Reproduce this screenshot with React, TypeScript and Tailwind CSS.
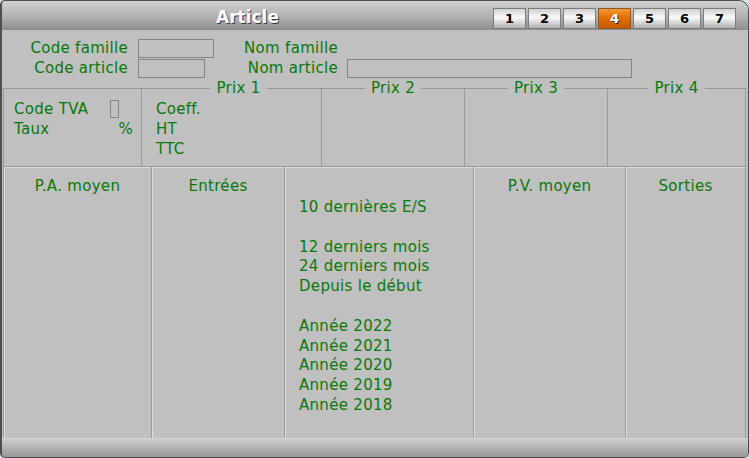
const TABS = ["1", "2", "3", "4", "5", "6", "7"];

const HISTORY = [
  "10 dernières E/S",
  "",
  "12 derniers mois",
  "24 derniers mois",
  "Depuis le début",
  "",
  "Année 2022",
  "Année 2021",
  "Année 2020",
  "Année 2019",
  "Année 2018",
];

function Tab({ label, active }: { label: string; active?: boolean }) {
  return (
    <button
      type="button"
      className={
        active
          ? "h-[21px] w-[33px] border border-[#8a5a20] bg-[linear-gradient(to_bottom,#f49a38,#e46f00_45%,#c85a00)] text-[13px] font-bold leading-[19px] text-white [text-shadow:1px_1px_0_#3a3a3a]"
          : "h-[21px] w-[33px] border border-[#7c7c7c] bg-[linear-gradient(to_bottom,#d0d0d0,#fafafa_45%,#b0b0b0)] text-[13px] font-bold leading-[19px] text-black"
      }
    >
      {label}
    </button>
  );
}

function Input({ className }: { className: string }) {
  return <div className={"border border-[#858585] " + className} />;
}

export default function App() {
  return (
    <div className="h-[458px] w-[749px] bg-[#d7e6e4] font-['DejaVu_Sans',Verdana,sans-serif] text-[15px] tracking-[0.3px] text-[#0a780a]">
      <div className="flex h-full flex-col overflow-hidden rounded-b-[5px] rounded-tl-[5px] rounded-tr-[10px] border border-l-2 border-[#4e4e4e] bg-[#c0c0c0]">
        <header className="flex h-[29px] shrink-0 bg-[linear-gradient(to_bottom,#d0d0d0,#b4b4b4_50%,#8e8e8e)]">
          <h1 className="flex-1 pt-[5px] text-center text-[17px] leading-[22px] font-bold tracking-normal text-white [text-shadow:1px_1px_0_#3c3c3c]">
            Article
          </h1>
          <nav className="flex gap-[2px] pr-[12px] pt-[7px] tracking-normal">
            {TABS.map((t) => (
              <Tab key={t} label={t} active={t === "4"} />
            ))}
          </nav>
        </header>

        <main className="flex flex-1 flex-col pl-[1px] pr-[2px]">
          <div className="pt-[8px]">
            <div className="flex h-[20px] items-center">
              <span className="w-[125px] text-right">Code famille</span>
              <Input className="ml-[10px] h-[19px] w-[76px]" />
              <span className="w-[124px] text-right">Nom famille</span>
            </div>
            <div className="flex h-[20px] items-center">
              <span className="w-[125px] text-right">Code article</span>
              <Input className="ml-[10px] h-[19px] w-[67px]" />
              <span className="w-[133px] text-right">Nom article</span>
              <Input className="ml-[9px] h-[19px] w-[285px]" />
            </div>
          </div>

          <div className="mt-[2px] flex h-[86px] leading-[20px]">
            <fieldset className="w-[138px] border-l border-t border-[#9a9a9a] pl-[10px] pr-[8px] pt-[2px]">
              <legend className="w-0 leading-[17px]">&nbsp;</legend>
              <div className="flex items-center">
                <span className="w-[96px]">Code TVA</span>
                <Input className="h-[18px] w-[9px]" />
              </div>
              <div className="flex justify-between">
                <span>Taux</span>
                <span>%</span>
              </div>
            </fieldset>
            <fieldset className="w-[180px] border-l border-t border-[#9a9a9a] pl-[14px] pt-[2px]">
              <legend className="mx-auto px-[6px] leading-[17px]">Prix 1</legend>
              <div>Coeff.</div>
              <div>HT</div>
              <div>TTC</div>
            </fieldset>
            <fieldset className="w-[143px] border-l border-t border-[#9a9a9a]">
              <legend className="mx-auto px-[6px] leading-[17px]">Prix 2</legend>
            </fieldset>
            <fieldset className="w-[143px] border-l border-t border-[#9a9a9a]">
              <legend className="mx-auto px-[6px] leading-[17px]">Prix 3</legend>
            </fieldset>
            <fieldset className="flex-1 border-l border-r border-t border-[#9a9a9a]">
              <legend className="mx-auto px-[6px] leading-[17px]">Prix 4</legend>
            </fieldset>
          </div>

          <div className="flex flex-1 leading-[20px]">
            <section className="w-[148px] border-l border-t border-[#9a9a9a] pt-[9px] text-center shadow-[inset_1px_1px_0_#dcdcdc]">
              P.A. moyen
            </section>
            <section className="w-[133px] border-l border-t border-[#9a9a9a] pt-[9px] text-center shadow-[inset_1px_1px_0_#dcdcdc]">
              Entrées
            </section>
            <section className="w-[189px] border-l border-t border-[#9a9a9a] pl-[14px] pt-[31px] leading-[19.8px] shadow-[inset_1px_1px_0_#dcdcdc]">
              {HISTORY.map((line, i) => (
                <div key={i} className="h-[19.8px]">
                  {line}
                </div>
              ))}
            </section>
            <section className="w-[152px] border-l border-t border-[#9a9a9a] pt-[9px] text-center shadow-[inset_1px_1px_0_#dcdcdc]">
              P.V. moyen
            </section>
            <section className="flex-1 border-l border-r border-t border-[#9a9a9a] pt-[9px] text-center shadow-[inset_1px_1px_0_#dcdcdc]">
              Sorties
            </section>
          </div>
        </main>

        <footer className="h-[19px] shrink-0 border-t border-[#d4d4d4] bg-[linear-gradient(to_bottom,#cdcdcd,#a8a8a8_70%,#979797)]" />
      </div>
    </div>
  );
}
